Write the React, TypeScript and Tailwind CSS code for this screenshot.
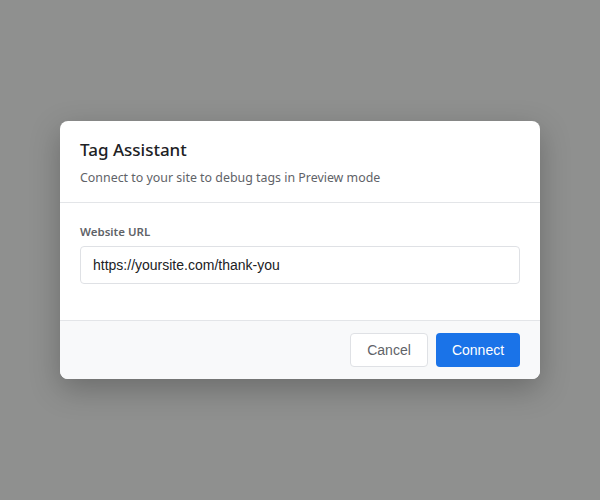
export default function App() {
    return (
        <div className="flex h-[500px] w-[600px] items-center justify-center bg-[#8f908f]">
            <div className="w-[480px] overflow-hidden rounded-lg bg-white shadow-[0_10px_30px_rgba(0,0,0,0.25)]">
                <div className="border-b border-[#e3e5e8] px-5 pt-[17px] pb-[14px] font-['Noto_Sans',sans-serif]">
                    <div className="text-[17px] leading-6 font-medium text-[#202124]">Tag Assistant</div>
                    <div className="mt-[6px] text-[12.4px] leading-5 text-[#5f6368]">
                        Connect to your site to debug tags in Preview mode
                    </div>
                </div>
                <div className="px-5 pt-[20px] pb-[36px]">
                    <label className="block font-['Noto_Sans',sans-serif] text-[11.5px] leading-[18px] font-semibold text-[#5f6368]">
                        Website URL
                    </label>
                    <input
                        type="text"
                        defaultValue="https://yoursite.com/thank-you"
                        className="mt-[5px] block h-[38px] w-full rounded border border-[#dfe1e5] px-3 font-['Liberation_Sans',Arial,sans-serif] text-[14px] text-[#202124] outline-none"
                    />
                </div>
                <div className="flex justify-end gap-2 border-t border-[#e3e5e8] bg-[#f8f9fa] px-5 pt-3 pb-3 font-['Liberation_Sans',Arial,sans-serif]">
                    <button className="h-[34px] w-[78px] rounded border border-[#dfe1e5] bg-white text-[14px] text-[#5f6368]">
                        Cancel
                    </button>
                    <button className="h-[34px] w-[84px] rounded bg-[#1a73e8] text-[14px] text-white">
                        Connect
                    </button>
                </div>
            </div>
        </div>
    );
}
